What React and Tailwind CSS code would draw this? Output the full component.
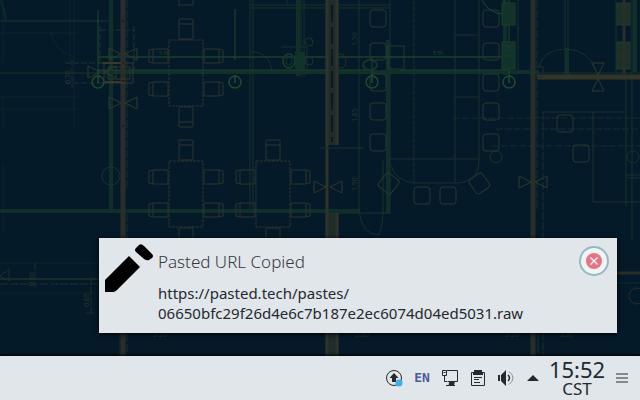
import React from "react";

const Table = ({ x, y }) => (
  <g transform={`translate(${x} ${y})`} stroke="#2a352f" fill="none">
    <rect x="0" y="0" width="34" height="66" strokeDasharray="3 1" />
    {[[10, -21, 0], [10, 67, 1]].map(([cx, cy, flip]) => (
      <g key={flip}>
        <rect x={cx} y={cy} width="14" height="20" rx="1" />
        <path d={flip ? `M${cx} ${cy + 15}h14` : `M${cx} ${cy + 5}h14`} />
      </g>
    ))}
    {[9, 42].map((cy) => (
      <g key={cy}>
        <path d={`M-1 ${cy}h-14l-5 1v12l5 1h14zM-16 ${cy}v14`} />
        <path d={`M35 ${cy}h14l5 1v12l-5 1h-14zM50 ${cy}v14`} />
      </g>
    ))}
  </g>
);

const Seat = ({ x, y, r = 0 }) => (
  <rect x={x} y={y} width="16" height="17" rx="3" fill="none" stroke="#29372f" transform={`rotate(${r} ${x + 8} ${y + 8})`} />
);

const Bow = ({ x, y, r = 0 }) => (
  <path transform={`translate(${x} ${y}) rotate(${r})`} d="M-14-6v12L-2 0zM14-6v12L2 0z" fill="none" stroke="#30382f" />
);

function Wallpaper() {
  return (
    <svg aria-hidden="true" className="absolute inset-0 h-full w-full" viewBox="0 0 640 400" preserveAspectRatio="xMidYMid slice" fontFamily="Open Sans, sans-serif" fontSize="7">
      <rect width="640" height="400" fill="#051a28" />
      {/* faint rooms */}
      <g fill="none" stroke="#0a252e">
        <path d="M3 0v62M3 96v34M3 164v70M70 0v62M74 0v130M0 33h78M0 97h78M0 109h78M50 30q5 22 24 27M0 263h99M0 293h99" />
        <path d="M0 21h110M0 0q5 10 6 20" stroke="#0b2a2c" strokeWidth="2" />
        <path d="M65 63h40M65 83h40M72 60v28M100 30h35M100 26v38M134 26v48" stroke="#1f302f" strokeDasharray="6 2" />
        <path d="M0 284h99M35 262v26M91 277v36M86 313h10" stroke="#1c2d2e" strokeDasharray="8 2" />
        <path d="M0 279h99" stroke="#152d2c" strokeWidth="2" />
      </g>
      {/* green pipes */}
      <g fill="none" stroke="#102f2a" strokeWidth="4">
        <path d="M111 0v210M0 211h360M97 72h442" />
        <path d="M298 0v76M388 40v174M505 0v75M567 48v28M635 0v72" />
      </g>
      <g fill="none" stroke="#14332b">
        <path d="M0 73h640M250 0v213M253 0v213M250 5h140M250 8h140M287 0v5M301 0v77M304 0v77M281 47h26v28M390 0v213M359 0v213M333 213h53M383 160v53M518 0v73M565 0v77M568 0v77M616 0v73M632 0v240M626 76v130" />
        <path d="M539 67q4-18 28-18q22 2 28 20M251 52q20 0 21 22M391 165q4 15 22 18M359 211q3 24 20 24q4-10 4-24" />
        <path d="M455 35h24M455 97h24M386 159h93M455 0v183M479 0v160q0 23-24 23h-42" stroke="#1a2f2e" />
        <path d="M414 0v183" stroke="#1a2f2e" strokeDasharray="5 1" />
        <path d="M453 118h187M496 129h144M492 146h148" stroke="#172c2c" strokeDasharray="7 2" />
        <path d="M482 0q7 14 22 14V0" stroke="#1c4a2c" />
      </g>
      <path d="M98 57h412" fill="none" stroke="#22502d" />
      <path d="M98 70h270M400 70h110" fill="none" stroke="#1f402b" />
      <path d="M235 9v51M98 10v65M372 57v18M509 0v75" fill="none" stroke="#20482d" />
      <g fill="none" stroke="#1f4b30" strokeWidth="1.5">
        <circle cx="98" cy="82" r="6" /><circle cx="235" cy="82" r="6" />
        <circle cx="372" cy="82" r="6" /><circle cx="509" cy="82" r="6" />
        <path d="M98 75v8M235 75v8M372 75v8M509 75v8" />
      </g>
      <g fill="none" stroke="#17372b">
        <circle cx="111" cy="176" r="9" /><circle cx="496" cy="157" r="6" /><circle cx="633" cy="157" r="6" />
        <ellipse cx="289" cy="61" rx="6" ry="7" strokeWidth="2" /><ellipse cx="289" cy="61" rx="3" ry="4" />
        <circle cx="309" cy="42" r="4" /><circle cx="309" cy="61" r="4" /><ellipse cx="341" cy="61" rx="5" ry="7" />
        <ellipse cx="370" cy="65" rx="7" ry="5" strokeWidth="2" />
      </g>
      {/* fixture blocks */}
      <g fill="#12332a" stroke="#1a3f2b">
        <rect x="502" y="3" width="13" height="22" /><rect x="502" y="42" width="13" height="27" />
        <rect x="617" y="3" width="13" height="22" fill="#1d3027" /><rect x="617" y="42" width="13" height="27" fill="#1d3027" />
        <rect x="388" y="46" width="16" height="23" fill="none" /><path d="M388 57h16M502 56h13M505 44l8 7M513 44l-8 7M620 6l7 7M627 6l-7 7M617 56h13" fill="none" />
        <rect x="295" y="52" width="10" height="17" stroke="none" />
      </g>
      {/* ochre walls */}
      <g fill="none" stroke="#2a2e2a">
        <path d="M123 0v356M533 0v356" strokeWidth="5" />
        <path d="M332 0v145M332 213v143" strokeWidth="13" stroke="#1f2c2a" />
        <path d="M327 0v356M337 0v145M337 213v143" strokeWidth="3" stroke="#2f332b" />
        <path d="M332 5v137" stroke="#0a1a24" strokeWidth="2" strokeDasharray="17 5" />
        <path d="M537 77h103" strokeWidth="5" stroke="#343527" />
        <path d="M624 0v76" strokeWidth="3" />
        <path d="M127 0v190M127 214v142M120 240v116M537 0v210M543 112v244" stroke="#1e2d2c" strokeDasharray="8 2" />
        <path d="M104 63h29v20h-29zM108 67h22v12h-22z" stroke="#30362c" />
        <path d="M102 63h20M104 82h20" stroke="#39392b" strokeWidth="2" />
        <path d="M533 67h10v10h-10M320 148h44M543 112h82M593 112v90h47M626 175h14M626 178h14" stroke="#1f2f2e" />
        <path d="M617 273h23" strokeWidth="3" /><path d="M617 283h23" stroke="#0b2d38" />
        <path d="M332 333v20M538 333v20" /><circle cx="637" cy="296" r="8" />
      </g>
      <g fill="#2a100f"><circle cx="123" cy="21" r="1" /><circle cx="123" cy="63" r="1" /><circle cx="123" cy="81" r="1" /><circle cx="123" cy="126" r="1" /></g>
      <Table x={169} y={40} />
      <Table x={169} y={161} />
      <Table x={256} y={161} />
      <rect x="179" y="-12" width="14" height="17" fill="none" stroke="#2a352f" />
      {[10, 43, 74, 103, 134].map((y) => (
        <g key={y}><Seat x={370} y={y} /><Seat x={483} y={y} /></g>
      ))}
      <Seat x={381} y={175} r={38} /><Seat x={414} y={187} /><Seat x={440} y={187} /><Seat x={471} y={175} r={-35} />
      <Seat x={557} y={115} /><Seat x={573} y={145} />
      <Bow x={123} y={54} /><Bow x={123} y={103} /><Bow x={102} y={72} /><Bow x={328} y={187} /><Bow x={533} y={182} /><Bow x={598} y={77} r={90} />
      <path d="M0 276l9-7v12z" fill="none" stroke="#1c2d2c" />
      <g fill="#2a372f">
        <text transform="translate(357 122) rotate(-90)">1.85</text><text transform="translate(357 191) rotate(-90)">1.50</text>
        <text transform="translate(357 46) rotate(-90)" fill="#1c3829">1.50</text><text transform="translate(89 307) rotate(-90)">0.85</text>
        <text transform="translate(34 286) rotate(-90)">0.50</text><text transform="translate(70 84) rotate(-90)">0.50</text>
        <text x="159" y="55" fill="#1f482a" fontSize="5">5.50</text><text x="433" y="55" fill="#1f482a" fontSize="5">5.50</text>
        <text x="153" y="337">2.20</text><text x="355" y="337">2.20</text><text x="505" y="337">2.20</text><text x="560" y="337">2.20</text>
      </g>
    </svg>
  );
}

function Notification() {
  return (
    <section role="alert" className="relative mx-[23px] mb-[23px] flex w-full max-w-[518px] items-start self-end bg-[#e1e6ea] pt-1.5 pr-2 pb-2.5 pl-1.5 text-[#24292d] shadow-[0_1px_5px_#000]">
      <svg aria-hidden="true" className="h-12 w-12 shrink-0" viewBox="0 0 48 48">
        <path d="M0 36 24 12 35 23 12 46Q10 48 8 48H0Z" />
        <path d="M31 4 34 1Q36-1 39 2L47 10Q49 12 47 14L44 16Q42 17 39 15L31 8Q29 6 31 4Z" />
      </svg>
      <div className="min-w-0 grow pl-[5px]">
        <h1 className="pt-1.5 text-[17px] leading-6 font-light text-[#34393d]">Pasted URL Copied</h1>
        <p className="mt-[9px] text-[15px] leading-5">
          https://pasted.tech/pastes/
          <wbr />
          06650bfc29f26d4e6c7b187e2ec6074d04ed5031.raw
        </p>
      </div>
      <button type="button" aria-label="Close" className="mt-0.5 flex h-[30px] w-[30px] shrink-0 items-center justify-center rounded-full border-2 border-[#94b8c4] bg-[#f2f3f5]">
        <svg className="h-4 w-4" viewBox="0 0 16 16">
          <circle cx="8" cy="8" r="8" fill="#e57584" />
          <path d="m4.5 4.5 7 7m0-7-7 7" stroke="#fff" strokeWidth="1.2" />
        </svg>
      </button>
    </section>
  );
}

const TrayButton = ({ label, children, className = "w-7" }) => (
  <button type="button" aria-label={label} className={`flex h-11 shrink-0 items-center justify-center ${className}`}>{children}</button>
);

function Panel() {
  return (
    <footer className="relative flex h-11 items-center justify-end bg-[#e1e6ea] pr-1 text-[#24292d] shadow-[0_-1px_3px_#000]">
      <TrayButton label="Updates">
        <svg className="h-[18px] w-[18px]" viewBox="0 0 18 18">
          <circle cx="9" cy="9" r="7.500" fill="none" stroke="#24292d" />
          <path d="M9 4 13.500 9H11v4H7V9H4.500Z" fill="#24292d" />
          <circle cx="14" cy="14" r="3.500" fill="#3daee9" />
        </svg>
      </TrayButton>
      <TrayButton label="Keyboard layout"><span className="font-['DejaVu_Sans_Mono',monospace] text-[13px] leading-5 font-bold text-[#4d5a9b]">EN</span></TrayButton>
      <TrayButton label="Network">
        <svg className="h-4 w-4" viewBox="0 0 16 16" fill="none" stroke="#24292d">
          <path d="M5 .5h10.500v11H5.500M.5.5h4v5h-4zM2.500 5.500v6h2.500M1.500 2.500h2" />
          <path d="M4 15.500h9M8 11.500h4v3H7z" fill="#24292d" />
        </svg>
      </TrayButton>
      <TrayButton label="Clipboard">
        <svg className="h-4 w-4" viewBox="0 0 16 16" fill="none" stroke="#24292d">
          <path d="M1.500 2.500h13v13h-13zM4 7.500h8M4 9.500h5M4 12.500h6" />
          <path d="M4 0h8v2h1v3H3V2h1z" fill="#24292d" stroke="none" />
        </svg>
      </TrayButton>
      <TrayButton label="Volume">
        <svg className="h-4 w-4" viewBox="0 0 16 16" fill="none" stroke="#24292d">
          <path d="M0 5h2v6H0zM3 5l5-5v16l-5-5z" fill="#24292d" stroke="none" />
          <path d="M10 5q3 3 0 6" strokeWidth="1.500" /><path d="M11 1.500q8 6.500 0 13" stroke="#8d9296" />
        </svg>
      </TrayButton>
      <TrayButton label="Show hidden icons" className="w-[26px]">
        <svg className="h-1.5 w-3" viewBox="0 0 12 6"><path d="m0 6 6-6 6 6z" fill="#24292d" /></svg>
      </TrayButton>
      <time className="flex w-[62px] shrink-0 flex-col items-center pb-0.5">
        <span className="text-[22px] leading-6">15:52</span>
        <span className="text-[17px] leading-4">CST</span>
      </time>
      <TrayButton label="Panel menu" className="w-7">
        <svg className="h-2.5 w-3" viewBox="0 0 12 10"><path d="M0 1h12M0 5h12M0 9h12" stroke="#85898d" strokeWidth="2" /></svg>
      </TrayButton>
    </footer>
  );
}

export default function App() {
  return (
    <main className="relative flex min-h-screen flex-col justify-end overflow-hidden bg-[#051a28] font-['Noto_Sans','Open_Sans',sans-serif]">
      <Wallpaper />
      <Notification />
      <Panel />
    </main>
  );
}
